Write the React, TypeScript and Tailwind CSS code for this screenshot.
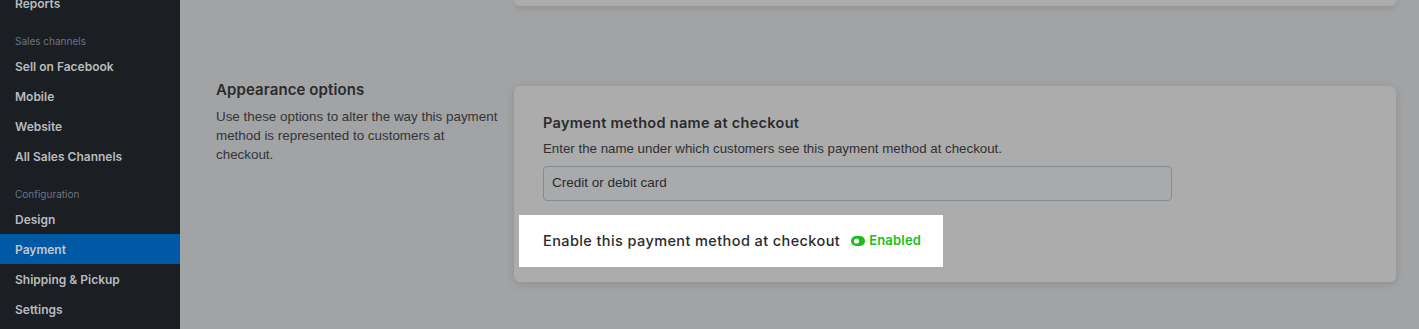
const NAV_TOP = ["Sell on Facebook", "Mobile", "Website", "All Sales Channels"];
const NAV_CONFIG = ["Design", "Payment", "Shipping & Pickup", "Settings"];

function NavItem({ label, active }: { label: string; active?: boolean }) {
  return (
    <div className={`h-[30px] flex items-center pt-[2px] px-[15px] text-[12px] font-semibold ${active ? "bg-[#0059a4] text-[#c4c8cd]" : "text-[#b8bbbf]"}`}>
      {label}
    </div>
  );
}

function NavLabel({ label }: { label: string }) {
  return <div className="pt-[16px] pb-[3px] px-[15px] text-[10px] leading-[14px] text-[#6b7583]">{label}</div>;
}

export default function App() {
  return (
    <div className="flex h-[329px] overflow-hidden bg-[#a2a3a5]" style={{ fontFamily: "Inter, 'Noto Sans', sans-serif" }}>
      <aside className="w-[180px] shrink-0 bg-[#1b1e22]">
        <div className="-mt-[12px]">
          <NavItem label="Reports" />
        </div>
        <NavLabel label="Sales channels" />
        {NAV_TOP.map(l => <NavItem key={l} label={l} />)}
        <NavLabel label="Configuration" />
        {NAV_CONFIG.map(l => <NavItem key={l} label={l} active={l === "Payment"} />)}
      </aside>

      <main className="flex-1 pl-[36px] pr-[23px]">
        <div className="ml-[298px] h-[6px] bg-[#acacac] rounded-b-md shadow-[0_2px_6px_rgba(0,0,0,0.12)]" />

        <div className="mt-[80px] flex">
          <div className="w-[298px] shrink-0 pr-[14px] -mt-[6px]">
            <h2 className="text-[15px] leading-[20px] font-semibold text-[#2a2b2d] tracking-[0.1px]">Appearance options</h2>
            <p className="mt-[7px] text-[13.4px] leading-[19px] text-[#333436]" style={{ fontFamily: "'Liberation Sans', Arial, sans-serif" }}>
              Use these options to alter the way this payment method is represented to customers at checkout.
            </p>
          </div>

          <div className="flex-1 bg-[#acacac] rounded-md shadow-[0_2px_10px_rgba(0,0,0,0.12)] px-[29px] pt-[27px] pb-[15px]">
            <h3 className="text-[14.5px] leading-[20px] font-semibold text-[#2a2b2d] tracking-[0.3px]">Payment method name at checkout</h3>
            <p className="mt-[8px] text-[13.3px] leading-[16px] text-[#2f3032]" style={{ fontFamily: "'Liberation Sans', Arial, sans-serif" }}>
              Enter the name under which customers see this payment method at checkout.
            </p>
            <div className="mt-[9px] w-[629px] h-[35px] rounded-[4px] border border-[#868b93] bg-[#a9aaac] flex items-center px-[8px] text-[13.5px] text-[#2a2b2d]" style={{ fontFamily: "'Liberation Sans', Arial, sans-serif" }}>
              Credit or debit card
            </div>
            <div className="mt-[14px] -ml-[24px] w-[424px] h-[52px] bg-white flex items-center pl-[24px]">
              <span className="text-[14.5px] font-medium text-[#2a2b2d] tracking-[0.4px]">Enable this payment method at checkout</span>
              <span className="ml-[11px] flex items-center gap-[4px] text-[13px] font-semibold text-[#16c01b] tracking-[0.2px]">
                <svg width="14" height="10" viewBox="0 0 14 10">
                  <rect x="0" y="0" width="14" height="10" rx="5" fill="#16c01b" />
                  <circle cx="5.5" cy="5" r="2.6" fill="#fff" />
                </svg>
                Enabled
              </span>
            </div>
          </div>
        </div>
      </main>
    </div>
  );
}
